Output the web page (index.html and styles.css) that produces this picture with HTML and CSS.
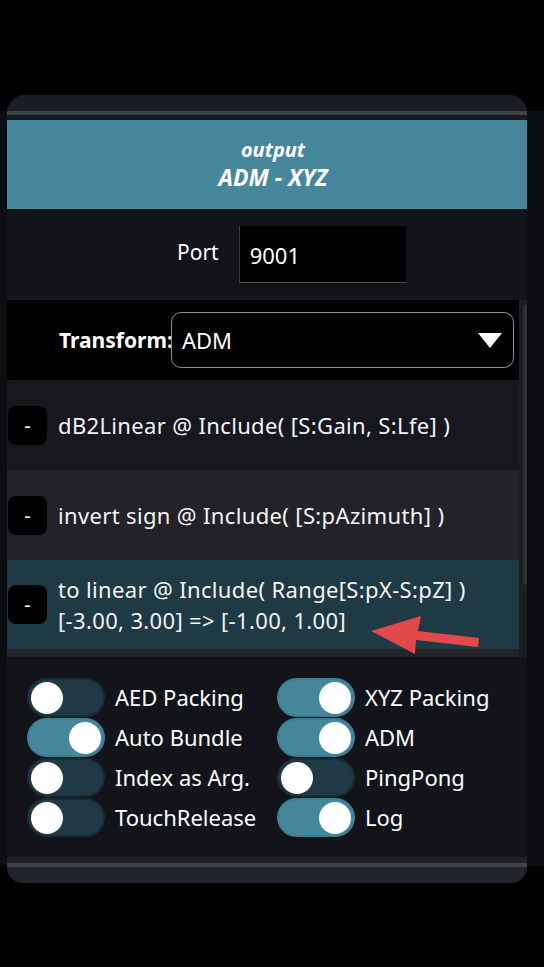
FILE: index.html
```html
<!DOCTYPE html>
<html>
<head>
<meta charset="utf-8">
<link rel="stylesheet" href="styles.css">
</head>
<body>
<div class="card">
  <div class="card-top"></div>
  <div class="rule"></div>
  <div class="card-gap"></div>
  <div class="header">
    <div class="kind">output</div>
    <div class="name">ADM - XYZ</div>
  </div>
  <div class="port-row">
    <span class="port-label">Port</span>
    <div class="port-input">9001</div>
  </div>
  <div class="scroll">
    <div class="list">
      <div class="transform-row">
        <span class="transform-label">Transform:</span>
        <div class="select">
          <span>ADM</span>
          <svg class="caret" width="24" height="15" viewBox="0 0 24 15"><polygon points="0,0 24,0 12,15" fill="#fff"/></svg>
        </div>
      </div>
      <div class="item item-a">
        <div class="minus">-</div>
        <div class="item-text">dB2Linear @ Include( [S:Gain, S:Lfe] )</div>
      </div>
      <div class="item item-b">
        <div class="minus">-</div>
        <div class="item-text">invert sign @ Include( [S:pAzimuth] )</div>
      </div>
      <div class="item item-c">
        <div class="minus">-</div>
        <div class="item-text">to linear @ Include( Range[S:pX-S:pZ] )<br>[-3.00, 3.00] =&gt; [-1.00, 1.00]</div>
      </div>
    </div>
    <div class="track"><div class="thumb"></div></div>
  </div>
  <div class="toggles">
    <div class="opt"><span class="toggle"><span class="knob"></span></span><span>AED Packing</span></div>
    <div class="opt"><span class="toggle on"><span class="knob"></span></span><span>XYZ Packing</span></div>
    <div class="opt"><span class="toggle on"><span class="knob"></span></span><span>Auto Bundle</span></div>
    <div class="opt"><span class="toggle on"><span class="knob"></span></span><span>ADM</span></div>
    <div class="opt"><span class="toggle"><span class="knob"></span></span><span>Index as Arg.</span></div>
    <div class="opt"><span class="toggle"><span class="knob"></span></span><span>PingPong</span></div>
    <div class="opt"><span class="toggle"><span class="knob"></span></span><span>TouchRelease</span></div>
    <div class="opt"><span class="toggle on"><span class="knob"></span></span><span>Log</span></div>
  </div>
  <div class="foot-strip"></div>
  <div class="rule"></div>
  <div class="foot"></div>
</div>
<svg class="arrow" width="544" height="967" viewBox="0 0 544 967">
  <polygon points="371,631 421,616 418,631 479,638 478,647 416,640 415,654" fill="#e2494a"/>
</svg>
</body>
</html>
```
FILE: styles.css
```css
* { box-sizing: border-box; }
html, body { margin: 0; }
body {
  position: relative;
  min-height: 967px;
  padding: 95px 0 0 7px;
  background: linear-gradient(#000 0 111px, #0b0d10 111px 866px, #000 866px);
  font-family: "Noto Sans", "Open Sans", sans-serif;
  color: #fff;
}
.card {
  width: 520px;
  height: 788px;
  border-radius: 18px 18px 16px 16px;
  overflow: hidden;
  background: #1a1d24;
  display: flex;
  flex-direction: column;
}
.card > * { flex: none; }
.card-top { height: 16px; background: #1a1d24; }
.rule { height: 4px; background: #424347; }
.card-gap { height: 5px; background: #18191e; }
.header {
  height: 89px;
  background: #47879c;
  display: flex;
  flex-direction: column;
  align-items: center;
  justify-content: center;
  font-weight: 700;
  font-style: italic;
  padding-left: 12px;
}
.header .kind { font-size: 20px; line-height: 26px; }
.header .name { font-size: 23px; line-height: 29px; }
.port-row {
  height: 91px;
  background: #121419;
  display: flex;
  align-items: center;
  padding-left: 170px;
  gap: 20px;
}
.port-label { font-size: 21px; margin-bottom: 6px; }
.port-input {
  width: 167px;
  height: 57px;
  background: #000;
  border-left: 1px solid #3a3b3d;
  border-bottom: 1px solid #4a4b4e;
  font-size: 22px;
  display: flex;
  align-items: center;
  padding-left: 10px;
  padding-top: 2px;
}
.scroll { height: 357px; display: flex; }
.list { width: 512px; background: #222429; }
.track { width: 8px; background: #1b1d22; padding: 5px 0 0 4px; }
.thumb { width: 4px; height: 280px; background: #2d2f35; border-radius: 3px; }
.transform-row {
  height: 80px;
  background: #000;
  display: flex;
  align-items: center;
  padding-left: 52px;
}
.transform-label { font-size: 21px; font-weight: 700; width: 112px; white-space: nowrap; }
.select {
  width: 343px;
  height: 56px;
  border: 1px solid #8e8e8e;
  border-radius: 10px;
  display: flex;
  align-items: center;
  justify-content: space-between;
  padding: 0 11px 0 10px;
  font-size: 22px;
}
.item {
  display: flex;
  align-items: center;
  padding-left: 1px;
  gap: 11px;
  font-size: 22px;
  line-height: 31px;
}
.item-a { height: 90px; background: #16181e; }
.item-b { height: 90px; background: #222328; }
.item-c { height: 89px; background: #1e3a45; }
.minus {
  width: 39px;
  height: 39px;
  background: #000;
  border-radius: 8px;
  display: flex;
  align-items: center;
  justify-content: center;
  font-size: 20px;
  flex: none;
}
.item-text { color: #f4f4f4; white-space: nowrap; letter-spacing: 0.35px; }
.toggles {
  height: 200px;
  background: #121419;
  display: grid;
  grid-template-columns: 250px 250px;
  grid-auto-rows: 40px;
  padding: 21px 0 0 20px;
}
.opt {
  display: flex;
  align-items: flex-start;
  gap: 10px;
  font-size: 22px;
  line-height: 39px;
  white-space: nowrap;
}
.toggle {
  width: 78px;
  height: 39px;
  border-radius: 20px;
  background: #1f3a44;
  border: 2px solid #182d36;
  display: flex;
  align-items: center;
  padding: 0 2px;
  flex: none;
}
.toggle.on {
  background: #47879c;
  border-color: #3f7d91;
  justify-content: flex-end;
}
.knob {
  width: 32px;
  height: 32px;
  border-radius: 50%;
  background: #fff;
}
.foot-strip { height: 6px; background: #1f2128; }
.foot { height: 16px; background: #21242d; }
.arrow { position: absolute; left: 0; top: 0; pointer-events: none; }
```
